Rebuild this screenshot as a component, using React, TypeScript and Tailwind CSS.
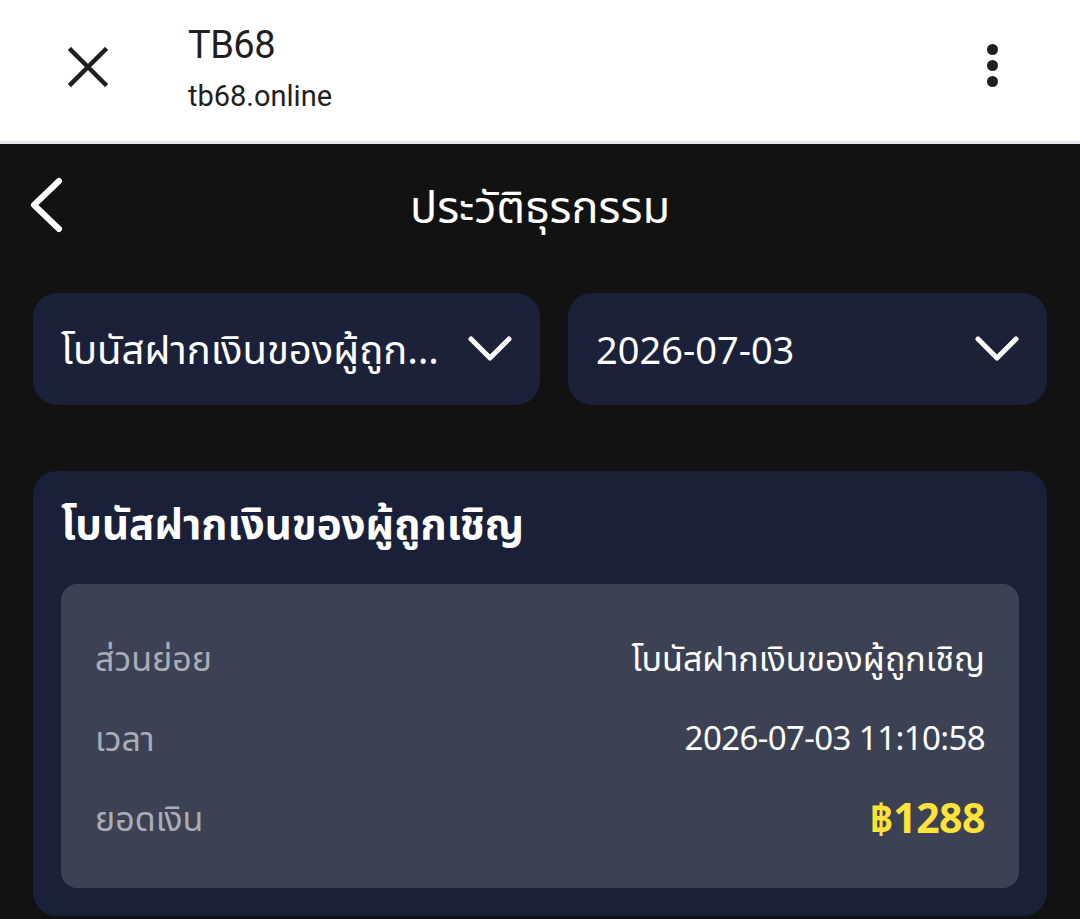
import React from "react";

function ChevronDown({ className }: { className?: string }) {
  return (
    <svg viewBox="0 0 44 26" className={className} fill="none">
      <path d="M3 3 L22 22 L41 3" stroke="white" strokeWidth="5" strokeLinecap="round" strokeLinejoin="round" />
    </svg>
  );
}

function Row({ label, value, accent, valueClass }: { label: string; value: string; accent?: boolean; valueClass?: string }) {
  return (
    <div className="flex items-center justify-between h-[80px]">
      <span className="text-[34px] text-[#a9adb8]">{label}</span>
      <span
        className={
          accent
            ? "text-[41px] font-bold text-[#fde23a] tracking-[-0.5px]"
            : valueClass ?? "text-[34px] text-white"
        }
      >
        {value}
      </span>
    </div>
  );
}

export default function App() {
  return (
    <div className="w-[1080px] h-[919px] overflow-hidden bg-[#121212] font-['Noto_Sans','Noto_Sans_Thai',sans-serif]">
      {/* Browser custom-tab bar */}
      <div className="h-[144px] bg-white flex items-center border-b-[3px] border-[#e3e6eb] font-['Roboto',sans-serif]">
        <div className="w-[188px] flex items-center pl-[68px] mb-[8px]">
          <svg viewBox="0 0 40 40" className="w-[40px] h-[40px]">
            <path d="M3 3 L37 37 M37 3 L3 37" stroke="#1f1f1f" strokeWidth="4.5" strokeLinecap="square" />
          </svg>
        </div>
        <div className="flex-1 flex flex-col mb-[6px]">
          <span className="text-[38px] leading-[48px] text-[#1f1f1f] tracking-[-0.5px]">TB68</span>
          <span className="text-[29px] leading-[38px] text-[#1f1f1f] mt-[8px]">tb68.online</span>
        </div>
        <div className="w-[132px] flex flex-col items-center gap-[5px] pr-[44px] mb-[10px]">
          <span className="w-[11px] h-[11px] rounded-full bg-[#1f1f1f]" />
          <span className="w-[11px] h-[11px] rounded-full bg-[#1f1f1f]" />
          <span className="w-[11px] h-[11px] rounded-full bg-[#1f1f1f]" />
        </div>
      </div>

      {/* Page header */}
      <div className="relative h-[124px] flex items-center justify-center">
        <svg viewBox="0 0 36 56" className="absolute left-[28px] top-[33px] w-[36px] h-[56px]" fill="none">
          <path d="M31 4 L6 28 L31 52" stroke="white" strokeWidth="6" strokeLinecap="round" strokeLinejoin="round" />
        </svg>
        <span className="text-[45px] text-white">ประวัติธุรกรรม</span>
      </div>

      {/* Filters */}
      <div className="flex gap-[28px] px-[33px] mt-[25px]">
        <div className="w-[507px] h-[112px] rounded-[24px] bg-[#1b2138] flex items-center justify-between pl-[28px] pr-[28px] gap-[8px]">
          <span className="whitespace-nowrap text-[40px] text-white">โบนัสฝากเงินของผู้ถูก…</span>
          <ChevronDown className="w-[44px] h-[26px] shrink-0" />
        </div>
        <div className="flex-1 h-[112px] rounded-[24px] bg-[#1b2138] flex items-center justify-between pl-[28px] pr-[28px]">
          <span className="text-[38px] text-white">2026-07-03</span>
          <ChevronDown className="w-[44px] h-[26px]" />
        </div>
      </div>

      {/* Transaction card */}
      <div className="mx-[33px] mt-[66px] rounded-[24px] bg-[#1a2038] px-[28px] pt-[22px] pb-[28px]">
        <div className="text-[42px] font-bold text-white leading-[60px]">โบนัสฝากเงินของผู้ถูกเชิญ</div>
        <div className="mt-[31px] rounded-[16px] bg-[#3c4254] px-[34px] pt-[34px] pb-[30px]">
          <Row label="ส่วนย่อย" value="โบนัสฝากเงินของผู้ถูกเชิญ" />
          <Row label="เวลา" value="2026-07-03 11:10:58" valueClass="text-[33px] text-white tracking-[-0.6px]" />
          <Row label="ยอดเงิน" value="฿1288" accent />
        </div>
      </div>
    </div>
  );
}
